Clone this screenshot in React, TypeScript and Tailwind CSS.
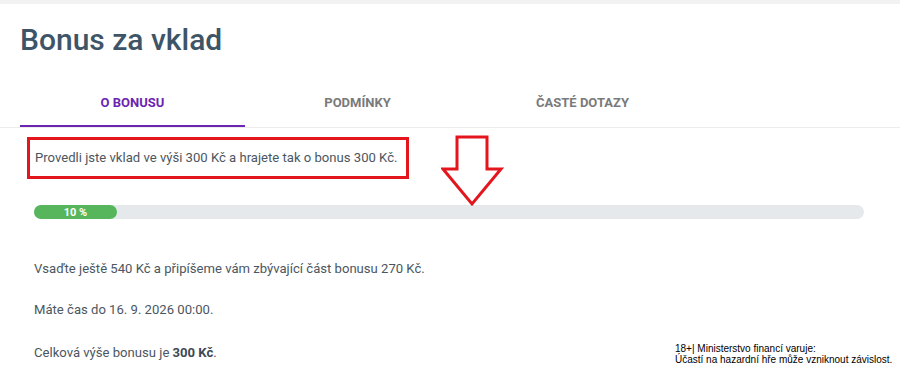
import React from 'react'

const tabs = ['O BONUSU', 'PODMÍNKY', 'ČASTÉ DOTAZY']

function DownArrow() {
  return (
    <svg
      className="absolute left-[441px] top-[131px]"
      width="64"
      height="72"
      viewBox="0 0 64 72"
      fill="none"
    >
      <path
        d="M16 2 H46 V34 H60 L31 69 L2 34 H16 Z"
        stroke="#e3161e"
        strokeWidth="3"
        strokeLinejoin="miter"
        fill="white"
      />
    </svg>
  )
}

export default function App() {
  const progress = 10

  return (
    <div className="relative w-[900px] h-[370px] overflow-hidden bg-white border-t-4 border-[#f2f2f2] font-['Roboto',sans-serif] text-[#4b5661]">
      {/* nadpis */}
      <h1 className="pl-5 pt-[18px] text-[30px] leading-[36px] font-medium text-[#3e5467]">Bonus za vklad</h1>

      {/* taby */}
      <div className="mt-[33px] border-b border-[#ececec]">
        <div className="flex pl-5">
          {tabs.map((tab, i) => (
            <div
              key={tab}
              className={`w-[225px] pb-[14px] pt-1 text-center text-[13px] leading-4 font-bold ${
                i === 0 ? 'text-[#6c25b0] border-b-2 border-[#6c25b0]' : 'text-[#7a7a7a] border-b-2 border-transparent'
              }`}
            >
              {tab}
            </div>
          ))}
        </div>
      </div>

      <DownArrow />

      <div className="pl-[27px] pt-[9px]">
        <div className="inline-block border-[3px] border-[#e3161e] pl-[5px] pr-[9px] py-[9px] text-[13.1px] leading-[18px]">
          Provedli jste vklad ve výši 300 Kč a hrajete tak o bonus 300 Kč.
        </div>

        {/* progress */}
        <div className="mt-[26px] ml-[7px] w-[830px] h-[14px] rounded-full bg-[#e6e9ec]">
          <div
            className="h-full rounded-full bg-[#57b65b] flex items-center justify-center text-[11px] font-bold text-white leading-none"
            style={{ width: `${progress}%` }}
          >
            {progress} %
          </div>
        </div>

        <div className="ml-[7px] text-[13.1px] leading-[17px]">
          <p className="mt-[41px]">Vsaďte ještě 540 Kč a připíšeme vám zbývající část bonusu 270 Kč.</p>
          <p className="mt-[24px]">Máte čas do 16. 9. 2026 00:00.</p>
          <p className="mt-[26px]">
            Celková výše bonusu je <b className="font-bold text-[#3e4852]">300 Kč</b>.
          </p>
        </div>
      </div>

      {/* varování */}
      <div className="absolute left-[675px] top-[339px] font-['Liberation_Sans',sans-serif] text-[10px] leading-[11px] text-black">
        <div>18+| Ministerstvo financí varuje:</div>
        <div>Účastí na hazardní hře může vzniknout závislost.</div>
      </div>
    </div>
  )
}
